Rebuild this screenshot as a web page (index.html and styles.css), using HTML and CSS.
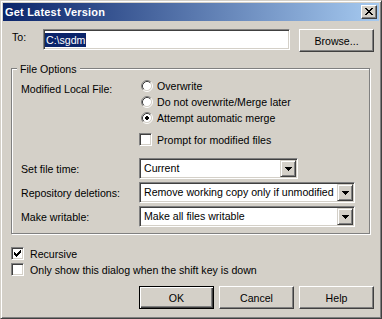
FILE: index.html
```html
<!DOCTYPE html>
<html>
<head>
<meta charset="utf-8">
<link rel="stylesheet" href="styles.css">
</head>
<body>
<div class="window">
  <div class="caption">
    <span class="caption-title">Get Latest Version</span>
    <span class="close-btn"><svg width="8" height="7" viewBox="0 0 8 7" shape-rendering="crispEdges"><path d="M0 0h2v1h-2z M6 0h2v1h-2z M1 1h2v1h-2z M5 1h2v1h-2z M2 2h4v1h-4z M3 3h2v1h-2z M2 4h4v1h-4z M1 5h2v1h-2z M5 5h2v1h-2z M0 6h2v1h-2z M6 6h2v1h-2z" fill="#000"/></svg></span>
  </div>

  <div class="to-row">
    <span class="to-label">To:</span>
    <div class="edit"><span class="sel">C:\sgdm</span></div>
    <button class="btn browse">Browse...</button>
  </div>

  <div class="group">
    <div class="legend">File Options</div>
    <div class="opt-row">
      <div class="opt-label mod-label">Modified Local File:</div>
      <div class="choices">
        <div class="choice">
          <span class="radio"><svg width="12" height="12" viewBox="0 0 12 12"><circle cx="6" cy="6" r="4.5" fill="#fff"/><path d="M2.11 9.89A5.5 5.5 0 0 1 9.89 2.11" stroke="#808080" fill="none"/><path d="M9.89 2.11A5.5 5.5 0 0 1 2.11 9.89" stroke="#fff" fill="none"/><path d="M2.82 9.18A4.5 4.5 0 0 1 9.18 2.82" stroke="#404040" fill="none"/><path d="M9.18 2.82A4.5 4.5 0 0 1 2.82 9.18" stroke="#d4d0c8" fill="none"/></svg></span>
          <span>Overwrite</span>
        </div>
        <div class="choice">
          <span class="radio"><svg width="12" height="12" viewBox="0 0 12 12"><circle cx="6" cy="6" r="4.5" fill="#fff"/><path d="M2.11 9.89A5.5 5.5 0 0 1 9.89 2.11" stroke="#808080" fill="none"/><path d="M9.89 2.11A5.5 5.5 0 0 1 2.11 9.89" stroke="#fff" fill="none"/><path d="M2.82 9.18A4.5 4.5 0 0 1 9.18 2.82" stroke="#404040" fill="none"/><path d="M9.18 2.82A4.5 4.5 0 0 1 2.82 9.18" stroke="#d4d0c8" fill="none"/></svg></span>
          <span>Do not overwrite/Merge later</span>
        </div>
        <div class="choice">
          <span class="radio"><svg width="12" height="12" viewBox="0 0 12 12"><circle cx="6" cy="6" r="4.5" fill="#fff"/><path d="M2.11 9.89A5.5 5.5 0 0 1 9.89 2.11" stroke="#808080" fill="none"/><path d="M9.89 2.11A5.5 5.5 0 0 1 2.11 9.89" stroke="#fff" fill="none"/><path d="M2.82 9.18A4.5 4.5 0 0 1 9.18 2.82" stroke="#404040" fill="none"/><path d="M9.18 2.82A4.5 4.5 0 0 1 2.82 9.18" stroke="#d4d0c8" fill="none"/><path d="M5 4h2v1h-2z M4 5h4v2h-4z M5 7h2v1h-2z" fill="#000" shape-rendering="crispEdges"/></svg></span>
          <span>Attempt automatic merge</span>
        </div>
        <div class="choice check-choice">
          <span class="check"></span>
          <span>Prompt for modified files</span>
        </div>
      </div>
    </div>

    <div class="opt-row combo-row first-combo">
      <div class="opt-label">Set file time:</div>
      <div class="combo short">
        <span class="combo-text">Current</span>
        <span class="combo-btn"><svg width="7" height="4" viewBox="0 0 7 4" shape-rendering="crispEdges"><path d="M0 0h7v1h-7z M1 1h5v1h-5z M2 2h3v1h-3z M3 3h1v1h-1z" fill="#000"/></svg></span>
      </div>
    </div>
    <div class="opt-row combo-row">
      <div class="opt-label">Repository deletions:</div>
      <div class="combo long">
        <span class="combo-text">Remove working copy only if unmodified</span>
        <span class="combo-btn"><svg width="7" height="4" viewBox="0 0 7 4" shape-rendering="crispEdges"><path d="M0 0h7v1h-7z M1 1h5v1h-5z M2 2h3v1h-3z M3 3h1v1h-1z" fill="#000"/></svg></span>
      </div>
    </div>
    <div class="opt-row combo-row">
      <div class="opt-label">Make writable:</div>
      <div class="combo long">
        <span class="combo-text">Make all files writable</span>
        <span class="combo-btn"><svg width="7" height="4" viewBox="0 0 7 4" shape-rendering="crispEdges"><path d="M0 0h7v1h-7z M1 1h5v1h-5z M2 2h3v1h-3z M3 3h1v1h-1z" fill="#000"/></svg></span>
      </div>
    </div>
  </div>

  <div class="checks">
    <div class="check-row">
      <span class="check"><svg width="11" height="11" viewBox="0 0 11 11" shape-rendering="crispEdges"><path d="M8 2h1v1h-1z M7 3h2v1h-2z M2 4h1v1h-1z M6 4h3v1h-3z M2 5h2v1h-2z M5 5h3v1h-3z M2 6h5v1h-5z M3 7h3v1h-3z M4 8h1v1h-1z" fill="#000"/></svg></span>
      <span>Recursive</span>
    </div>
    <div class="check-row">
      <span class="check"></span>
      <span>Only show this dialog when the shift key is down</span>
    </div>
  </div>

  <div class="buttons">
    <button class="btn default">OK</button>
    <button class="btn">Cancel</button>
    <button class="btn">Help</button>
  </div>
</div>
</body>
</html>
```

FILE: styles.css
```css
html, body {
  margin: 0;
  padding: 0;
  background: #d4d0c8;
}

.window {
  width: 382px;
  height: 319px;
  box-sizing: border-box;
  overflow: hidden;
  background: #d4d0c8;
  border: 1px solid;
  border-color: #d4d0c8 #404040 #404040 #d4d0c8;
  box-shadow: inset 1px 1px 0 #ffffff, inset -1px -1px 0 #808080;
  padding: 2px;
  font-family: "Liberation Sans", Arial, sans-serif;
  font-size: 10.6px;
  color: #000;
}

.caption {
  height: 18px;
  display: flex;
  align-items: center;
  justify-content: space-between;
  padding-left: 2px;
  background: linear-gradient(to right, #0a246a, #a6caf0);
}

.caption-title {
  color: #fff;
  font-weight: bold;
  font-size: 11px;
  letter-spacing: 0.2px;
  line-height: 18px;
}

.close-btn {
  width: 16px;
  height: 14px;
  box-sizing: border-box;
  margin-right: 2px;
  background: #d4d0c8;
  border: 1px solid;
  border-color: #ffffff #404040 #404040 #ffffff;
  box-shadow: inset -1px -1px 0 #808080;
  display: flex;
  align-items: center;
  justify-content: center;
  padding: 0 1px 1px 0;
}

.close-btn svg { display: block; }

/* To row */
.to-row {
  display: flex;
  align-items: flex-start;
  margin-top: 8px;
  padding-left: 9px;
}

.to-label {
  width: 31px;
  line-height: 16px;
}

.edit {
  width: 247px;
  height: 21px;
  box-sizing: border-box;
  background: #fff;
  border: 1px solid;
  border-color: #808080 #ffffff #ffffff #808080;
  box-shadow: inset 1px 1px 0 #404040, inset -1px -1px 0 #d4d0c8;
  padding: 3px 0 0 1px;
}

.sel {
  display: inline-block;
  background: #0a246a;
  color: #fff;
  line-height: 14px;
  padding: 0 1px;
}

.btn {
  width: 75px;
  height: 23px;
  box-sizing: border-box;
  padding: 0;
  margin: 0;
  font: inherit;
  color: #000;
  background: #d4d0c8;
  border: 1px solid;
  border-color: #ffffff #404040 #404040 #ffffff;
  box-shadow: inset -1px -1px 0 #808080;
  border-radius: 0;
  text-align: center;
}

.browse {
  margin-left: 9px;
}

.btn.default {
  border-color: #000;
  box-shadow: inset 1px 1px 0 #ffffff, inset -1px -1px 0 #404040, inset -2px -2px 0 #808080;
}

/* group box */
.group {
  position: relative;
  width: 359px;
  height: 166px;
  box-sizing: border-box;
  margin: 16px 0 0 8px;
  border: 1px solid #808080;
  box-shadow: inset 1px 1px 0 #ffffff, 1px 1px 0 #ffffff;
  padding: 9px 0 0 9px;
}

.legend {
  position: absolute;
  top: -6px;
  left: 5px;
  padding: 0 3px;
  line-height: 13px;
  background: #d4d0c8;
}

.opt-row {
  display: flex;
}

.opt-label {
  width: 118px;
  flex: none;
  line-height: 16px;
}

.mod-label {
  margin-top: 3px;
}

.choices {
  display: flex;
  flex-direction: column;
}

.choice {
  display: flex;
  align-items: center;
  height: 16px;
  line-height: 16px;
}

.radio {
  width: 12px;
  height: 12px;
  margin-left: 2px;
  margin-right: 4px;
}

.radio svg { display: block; }

.check-choice {
  margin-top: 5px;
  height: 17px;
}

.check-choice .check {
  margin-right: 5px;
}

.check {
  width: 13px;
  height: 13px;
  flex: none;
  box-sizing: border-box;
  background: #fff;
  border: 1px solid;
  border-color: #808080 #ffffff #ffffff #808080;
  box-shadow: inset 1px 1px 0 #404040, inset -1px -1px 0 #d4d0c8;
}

.check svg { display: block; }

.combo-row {
  align-items: center;
  margin-top: 3px;
}

.first-combo {
  margin-top: 10px;
}

.combo {
  height: 21px;
  box-sizing: border-box;
  display: flex;
  background: #fff;
  border: 1px solid;
  border-color: #808080 #ffffff #ffffff #808080;
  box-shadow: inset 1px 1px 0 #404040, inset -1px -1px 0 #d4d0c8;
  padding: 1px;
}

.combo.short { width: 159px; }
.combo.long { width: 216px; }

.combo-text {
  flex: 1;
  padding-left: 3px;
  line-height: 17px;
  white-space: nowrap;
  overflow: hidden;
}

.combo-btn {
  width: 16px;
  height: 17px;
  flex: none;
  box-sizing: border-box;
  background: #d4d0c8;
  border: 1px solid;
  border-color: #d4d0c8 #404040 #404040 #d4d0c8;
  box-shadow: inset 1px 1px 0 #ffffff, inset -1px -1px 0 #808080;
  display: flex;
  align-items: center;
  justify-content: center;
}

.combo-btn svg { display: block; }

/* bottom checkboxes */
.checks {
  margin: 12px 0 0 8px;
}

.check-row {
  display: flex;
  align-items: flex-start;
  height: 16px;
  line-height: 16px;
}

.check-row .check {
  margin-top: 1px;
  margin-right: 6px;
}

.buttons {
  display: flex;
  justify-content: flex-end;
  gap: 5px;
  margin-top: 8px;
  padding-right: 5px;
}
```
